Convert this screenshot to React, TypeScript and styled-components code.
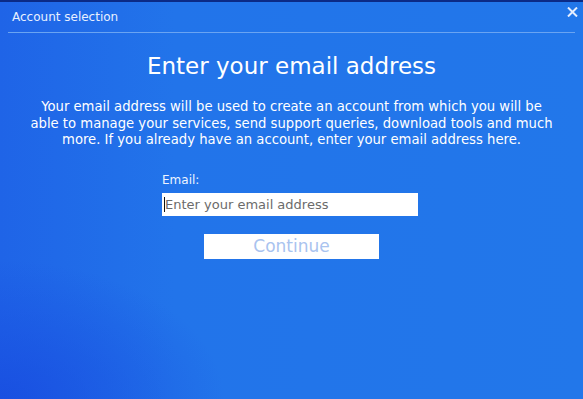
import React from "react";
import styled, { createGlobalStyle } from "styled-components";

const Global = createGlobalStyle`
  html, body { margin: 0; padding: 0; }
  body { width: 583px; height: 399px; overflow: hidden; background: #2176e9; }
`;

const Window = styled.div`
  position: relative;
  width: 583px;
  height: 399px;
  box-sizing: border-box;
  border-top: 2px solid #0b2a86;
  font-family: "DejaVu Sans", Verdana, sans-serif;
  color: #ffffff;
  background:
    radial-gradient(ellipse 55% 50% at 0% 100%, rgba(24, 76, 224, 0.85), rgba(24, 76, 224, 0) 70%),
    linear-gradient(90deg, #1f64e7 0%, #2274ea 30%, #2277ea 100%);
  display: flex;
  flex-direction: column;
`;

const TitleBar = styled.div`
  height: 30px;
  margin: 0 8px 0 8px;
  border-bottom: 1px solid #6aa4f2;
  display: flex;
  align-items: center;
  padding: 0 0 0 4px;
`;

const TitleText = styled.span`
  font-size: 12px;
  color: #e8f0ff;
  margin-top: -1px;
`;

const CloseButton = styled.button`
  position: absolute;
  top: 5px;
  right: 5px;
  border: none;
  background: none;
  padding: 0;
  width: 11px;
  height: 10px;
  display: flex;
  cursor: pointer;
`;

const Body = styled.div`
  display: flex;
  flex-direction: column;
  align-items: center;
  padding-top: 18px;
`;

const Heading = styled.h1`
  margin: 0;
  font-weight: normal;
  font-size: 23px;
  line-height: 30px;
  color: #ffffff;
`;

const Description = styled.p`
  margin: 18px 0 0 0;
  font-size: 13.2px;
  line-height: 16.5px;
  text-align: center;
  white-space: nowrap;
  color: #ffffff;
`;

const Form = styled.div`
  margin: 24px 3px 0 0;
  width: 256px;
  display: flex;
  flex-direction: column;
`;

const Label = styled.label`
  font-size: 12px;
  line-height: 14px;
  color: #eef4ff;
`;

const InputWrap = styled.div`
  position: relative;
  display: flex;
  margin-top: 6px;
`;

const Input = styled.input`
  width: 256px;
  height: 23px;
  box-sizing: border-box;
  border: none;
  outline: none;
  padding: 0 0 0 3px;
  font-family: "DejaVu Sans", Verdana, sans-serif;
  font-size: 13px;
  color: #333;
  background: #ffffff;
  &::placeholder { color: #6b6b6b; }
`;

const Caret = styled.span`
  position: absolute;
  left: 2px;
  top: 4px;
  width: 1px;
  height: 15px;
  background: #111;
`;

const ContinueButton = styled.button`
  margin: 18px 0 0 0;
  width: 175px;
  height: 25px;
  border: none;
  background: #ffffff;
  font-family: "DejaVu Sans", Verdana, sans-serif;
  font-size: 17px;
  color: #a9c3ef;
  padding: 0;
`;

export default function App() {
  return (
    <>
      <Global />
      <Window>
        <TitleBar>
          <TitleText>Account selection</TitleText>
        </TitleBar>
        <CloseButton aria-label="Close">
          <svg width="11" height="10" viewBox="0 0 11 10">
            <path d="M1 0.5 L10 9.5 M10 0.5 L1 9.5" stroke="#e6eeff" strokeWidth="2" />
          </svg>
        </CloseButton>
        <Body>
          <Heading>Enter your email address</Heading>
          <Description>
            Your email address will be used to create an account from which you will be
            <br />
            able to manage your services, send support queries, download tools and much
            <br />
            more. If you already have an account, enter your email address here.
          </Description>
          <Form>
            <Label htmlFor="email">Email:</Label>
            <InputWrap>
              <Input id="email" placeholder="Enter your email address" />
              <Caret />
            </InputWrap>
          </Form>
          <ContinueButton>Continue</ContinueButton>
        </Body>
      </Window>
    </>
  );
}
